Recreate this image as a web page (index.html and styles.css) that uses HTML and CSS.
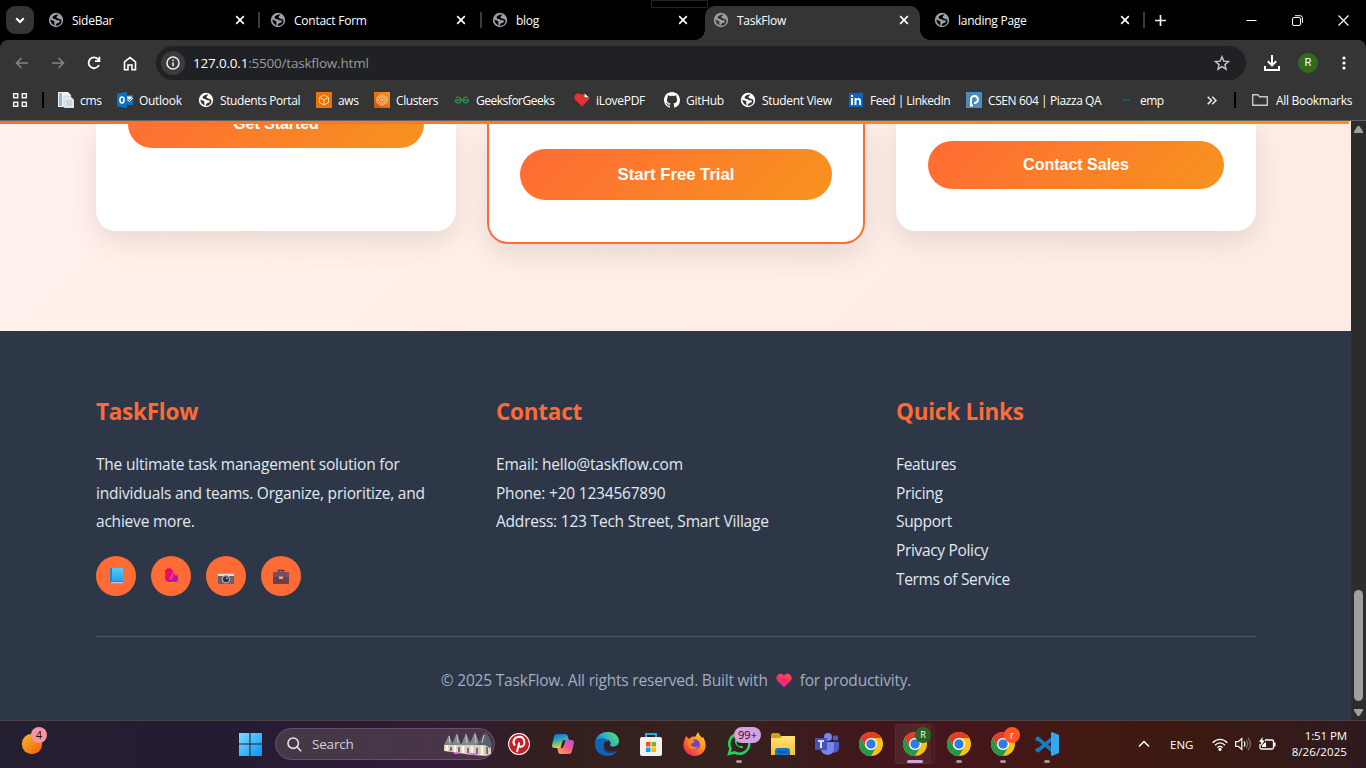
FILE: index.html
```html
<!DOCTYPE html>
<html lang="en">
<head>
<meta charset="utf-8">
<title>TaskFlow</title>
<link rel="stylesheet" href="styles.css">
</head>
<body>
<svg class="defs" width="0" height="0">
  <defs>
    <symbol id="globe" viewBox="0 0 16 16"><circle cx="8" cy="8" r="7.200" fill="currentColor"/><path d="M10.300 2.200C7.500 2.400 4.400 4 4.600 5.800c.2 1.200 1.900.9 2.900 1.500.8.6 1.700 1.200 3.200.9 1.400.1 1.500 1.200.8 2-.9.9-2.600.5-3.300 1.900l-.7 1.600c3.200.4 5.900-1.500 6.100-4.700-.3-1.300-1-2.200-2.700-2.300-1.500 0-2.500-.9-2.300-2.200.3-.8 1.300-.7 1.700-2.300z" fill="var(--cut)"/><path d="M2.300 7.600c.2 2.600 1.500 4.800 4.100 5.800.5-1.400-.5-1.900-.1-2.800C7.200 8.800 4.500 9 2.300 7.600z" fill="var(--cut)"/></symbol>
    <symbol id="close" viewBox="0 0 10 10"><path d="M1.200 1.200l7.600 7.600M8.800 1.200L1.200 8.800" stroke="currentColor" stroke-width="1.700"/></symbol>
    <symbol id="chrome" viewBox="0 0 24 24"><circle cx="12" cy="12" r="12" fill="#fbc116"/><path d="M1.600 6A12 12 0 0 1 22.400 6H12a6 6 0 0 0-5.200 9z" fill="#e33b2e"/><path d="M1.600 6A12 12 0 0 0 12 24l5.200-9A6 6 0 0 1 6.800 15z" fill="#229a48"/><circle cx="12" cy="12" r="6" fill="#fff"/><circle cx="12" cy="12" r="4.700" fill="#2b7de9"/></symbol>
    <linearGradient id="blue" x2="1" y2="1"><stop stop-color="#7ddcff"/><stop offset="1" stop-color="#0794f5"/></linearGradient>
    <linearGradient id="orange" x2="1" y2="1"><stop stop-color="#f4bc28"/><stop offset="1" stop-color="#f45b0b"/></linearGradient>
    <linearGradient id="book" x2="0" y2="1"><stop stop-color="#52ccf4"/><stop offset="1" stop-color="#2aa3ed"/></linearGradient>
    <linearGradient id="bird" x2=".6" y2="1"><stop stop-color="#f40c52"/><stop offset=".6" stop-color="#e60a78"/><stop offset="1" stop-color="#9b25b5"/></linearGradient>
    <linearGradient id="heart" x1=".7" x2=".4" y2="1"><stop stop-color="#fb5148"/><stop offset=".5" stop-color="#fa2b68"/><stop offset="1" stop-color="#e61dab"/></linearGradient>
    <linearGradient id="edge" x1="0" y1=".8" x2="1" y2=".1"><stop stop-color="#0c57b5"/><stop offset=".5" stop-color="#21a9df"/><stop offset="1" stop-color="#62df55"/></linearGradient>
    <linearGradient id="fox" x1="1" x2=".2" y2="1"><stop stop-color="#ffe23a"/><stop offset=".5" stop-color="#ff8a1f"/><stop offset="1" stop-color="#f2205c"/></linearGradient>
    <linearGradient id="cop1" x2=".3" y2="1"><stop stop-color="#1d60dd"/><stop offset=".5" stop-color="#25adb8"/><stop offset="1" stop-color="#eed034"/></linearGradient>
    <linearGradient id="cop2" x1="1" x2=".2" y2="1"><stop stop-color="#a657ee"/><stop offset=".5" stop-color="#ef5989"/><stop offset="1" stop-color="#ff9a54"/></linearGradient>
    <linearGradient id="folder" x2="0" y2="1"><stop stop-color="#ffe27a"/><stop offset="1" stop-color="#fbc02e"/></linearGradient>
    <linearGradient id="amber" x1="1" x2="0" y2="1"><stop stop-color="#f89a10"/><stop offset="1" stop-color="#cc4f18"/></linearGradient>
  </defs>
</svg>

<header class="browser">
  <div class="tabstrip">
    <span class="tab-search"><svg width="10" height="7" viewBox="0 0 10 7"><path d="M1.200 1.200L5 5l3.800-3.800" fill="none" stroke="#fff" stroke-width="2"/></svg></span>
    <div class="tab tab-first"><svg class="fav"><use href="#globe"/></svg><span>SideBar</span><svg class="x"><use href="#close"/></svg></div>
    <i class="tab-sep"></i>
    <div class="tab"><svg class="fav"><use href="#globe"/></svg><span>Contact Form</span><svg class="x"><use href="#close"/></svg></div>
    <i class="tab-sep"></i>
    <div class="tab"><svg class="fav"><use href="#globe"/></svg><span>blog</span><svg class="x"><use href="#close"/></svg></div>
    <div class="tab tab-active"><svg class="fav"><use href="#globe"/></svg><span>TaskFlow</span><svg class="x"><use href="#close"/></svg></div>
    <div class="tab tab-last"><svg class="fav"><use href="#globe"/></svg><span>landing Page</span><svg class="x"><use href="#close"/></svg></div>
    <i class="tab-sep"></i>
    <svg class="new-tab" width="11" height="11" viewBox="0 0 11 11"><path d="M5.500 0v11M0 5.500h11" stroke="#eee" stroke-width="1.700"/></svg>
    <div class="win">
      <svg width="11" height="11" viewBox="0 0 11 11"><path d="M.5 5.500h10" stroke="#fff"/></svg>
      <svg width="11" height="11" viewBox="0 0 11 11" fill="none" stroke="#fff"><rect x=".5" y="2.500" width="8" height="8" rx="1.500"/><path d="M3 .7h5.200q2.200 0 2.200 2.200v5"/></svg>
      <svg width="11" height="11" viewBox="0 0 11 11"><path d="M.5.5l10 10M10.500.5l-10 10" stroke="#fff" stroke-width="1.200"/></svg>
    </div>
    <i class="drag-mark"></i>
  </div>

  <div class="toolbar">
    <div class="nav">
      <svg width="14" height="12" viewBox="0 0 14 12" fill="none" stroke="#858585" stroke-width="1.600"><path d="M13 6H1.500M6.500 1l-5 5 5 5"/></svg>
      <svg width="14" height="12" viewBox="0 0 14 12" fill="none" stroke="#858585" stroke-width="1.600"><path d="M1 6h11.500M7.500 1l5 5-5 5"/></svg>
      <svg width="14" height="14" viewBox="0 0 14 14" fill="none" stroke="#fff" stroke-width="1.800"><path d="M12 9A5.400 5.400 0 1 1 11.300 3.500L12.500 5M12.400.8v4.400H8"/></svg>
      <svg width="14" height="15" viewBox="0 0 14 15" fill="none" stroke="#fff" stroke-width="1.600"><path d="M1.500 13.700V5.800L7 1.500l5.500 4.300v7.900H9V9H5v4.700z"/></svg>
    </div>
    <div class="omnibox">
      <span class="info"><svg width="14" height="14" viewBox="0 0 14 14"><circle cx="7" cy="7" r="6" fill="none" stroke="#eee" stroke-width="1.500"/><path d="M7 6.200v4M7 3.500v1.500" stroke="#eee" stroke-width="1.500"/></svg></span>
      <span class="url"><b>127.0.0.1</b>:5500/taskflow.html</span>
      <svg class="star" width="16" height="16" viewBox="0 0 16 16"><path d="M8 1.700l1.800 4.400 4.700.4-3.600 3.100 1.100 4.600L8 11.700l-4 2.500 1.100-4.600L1.500 6.500l4.700-.4z" fill="none" stroke="#c7c7c7" stroke-width="1.400"/></svg>
    </div>
    <svg class="download" width="16" height="16" viewBox="0 0 16 16" fill="none" stroke="#fff" stroke-width="2"><path d="M8 0v10M3.800 6.200L8 10.400l4.200-4.200M1 11v4h14v-4"/></svg>
    <span class="avatar">R</span>
    <svg class="dots" width="4" height="14" viewBox="0 0 4 14" fill="#fff"><circle cx="2" cy="2" r="1.600"/><circle cx="2" cy="7" r="1.600"/><circle cx="2" cy="12" r="1.600"/></svg>
  </div>

  <div class="bookmarks">
    <svg class="apps" width="16" height="16" viewBox="0 0 16 16" fill="none" stroke="#eee" stroke-width="1.500"><path d="M1.700 1.700h4v4h-4zM10.300 1.700h4v4h-4zM1.700 10.300h4v4h-4zM10.300 10.300h4v4h-4z"/></svg>
    <i class="bm-sep"></i>
    <span class="bm bm-cms"><svg viewBox="0 0 16 16"><path d="M0 0h10l3 3v12H0z" fill="#edf3f6"/><path d="M1 1h3v13H1z" fill="#92b9d4"/><path d="M6 4h6l4 4v8H6z" fill="#e4e9ec" stroke="#bbc5cc" stroke-width=".6"/><path d="M8 9h6M8 11h6M8 13h6" stroke="#aab6bd" stroke-width=".7"/></svg>cms</span>
    <span class="bm bm-outlook"><svg viewBox="0 0 16 16"><path d="M9 3h7v10H9z" fill="#0872c4"/><path d="M10 4.500h5v1L12.500 8 10 6z" fill="#fff"/><path d="M10 7.500l2.500 2L16 6" fill="none" stroke="#fff"/><path d="M0 1.500L10 0v16L0 14.500z" fill="#0872c4"/><ellipse cx="5" cy="8" rx="2.100" ry="2.900" fill="none" stroke="#fff" stroke-width="1.500"/></svg>Outlook</span>
    <span class="bm bm-portal"><svg class="white-globe"><use href="#globe"/></svg>Students Portal</span>
    <span class="bm bm-aws"><svg viewBox="0 0 16 16"><path d="M0 0h16v16H0z" fill="#ed7203"/><path d="M8 3l4.500 2.400v5.200L8 13l-4.500-2.400V5.400zM3.500 5.400L8 8l4.500-2.600M8 8v5" fill="none" stroke="#ffe1bc" stroke-width=".9"/></svg>aws</span>
    <span class="bm bm-clusters"><svg viewBox="0 0 16 16"><path d="M0 0h16v16H0z" fill="url(#amber)"/><g fill="none" stroke="#ffd5aa" stroke-width=".9"><path d="M8 2.500l5 3v5l-5 3-5-3v-5z"/><circle cx="8" cy="8" r="3.300"/><circle cx="8" cy="8" r="1.200"/></g></svg>Clusters</span>
    <span class="bm bm-gfg"><svg viewBox="0 0 16 16" fill="none" stroke="#2f8d46" stroke-width="1.300"><path d="M1 8h14M2 5.700c2-1.200 4.900-.3 4.900 2.300 0 4-5.200 3.800-5.700 0M14 5.700c-2-1.200-4.900-.3-4.900 2.300 0 4 5.200 3.800 5.700 0"/></svg>GeeksforGeeks</span>
    <span class="bm bm-pdf"><svg viewBox="0 0 16 16"><path d="M8 14.500L1.500 8C-2 4 3-.5 7.500 2.500L10 2v4h5.500c-.3 1-1 2-1.500 2.500z" fill="#e5322d"/><path d="M10.500 1.500l4.500 4h-4.500z" fill="#fff"/></svg>iLovePDF</span>
    <span class="bm bm-github"><svg viewBox="0 0 16 16"><path fill="#fff" d="M8 0C3.580 0 0 3.580 0 8c0 3.540 2.290 6.530 5.470 7.590.4.070.55-.17.55-.38 0-.19-.01-.82-.01-1.490-2.010.37-2.530-.49-2.690-.94-.09-.23-.48-.94-.82-1.130-.28-.15-.68-.52-.01-.53.63-.01 1.080.58 1.230.82.72 1.210 1.870.87 2.330.66.070-.52.28-.87.51-1.070-1.780-.2-3.640-.89-3.640-3.950 0-.87.31-1.590.82-2.150-.08-.2-.36-1.020.08-2.120 0 0 .67-.21 2.200.82.64-.18 1.320-.27 2-.27s1.360.09 2 .27c1.530-1.040 2.200-.82 2.200-.82.44 1.100.16 1.920.08 2.120.51.56.82 1.270.82 2.150 0 3.070-1.870 3.750-3.650 3.950.29.25.54.73.54 1.480 0 1.070-.01 1.930-.01 2.200 0 .21.15.46.55.38A8 8 0 0 0 16 8c0-4.420-3.580-8-8-8z"/></svg>GitHub</span>
    <span class="bm bm-student"><svg class="white-globe"><use href="#globe"/></svg>Student View</span>
    <span class="bm bm-linkedin"><svg viewBox="0 0 16 16"><path d="M1 1h14v14H1z" fill="#0a66c2"/><path d="M3 6h2v7H3zM3 3h2v2H3zM6.500 6h2v1c1.100-1.800 4.500-1.500 4.500 1.600V13h-2V9c0-1.800-2.500-1.800-2.500 0v4h-2z" fill="#fff"/></svg>Feed | LinkedIn</span>
    <span class="bm bm-piazza"><svg viewBox="0 0 16 16"><path d="M0 0h16v16H0z" fill="#4b8bbd"/><path d="M5 14V6.800a3.500 3.500 0 1 1 3 4.200M4 13.500h3" fill="none" stroke="#fff" stroke-width="2"/></svg>CSEN 604 | Piazza QA</span>
    <span class="bm bm-emp"><svg viewBox="0 0 16 16"><path d="M5 8h7" stroke="#126094" stroke-width="1.600"/></svg>emp</span>
    <svg class="more" width="10" height="9" viewBox="0 0 10 9" fill="none" stroke="#eee" stroke-width="1.500"><path d="M.7.7l3.800 3.800L.7 8.300M5.200.7L9 4.500 5.200 8.300"/></svg>
    <i class="bm-sep"></i>
    <span class="bm bm-all"><svg viewBox="0 0 16 16"><path d="M.7 13.300V2.700h5l2 2h7.600v8.600z" fill="none" stroke="#c8c8c8" stroke-width="1.400"/></svg>All Bookmarks</span>
  </div>
</header>

<div class="viewport">
  <div class="page">
    <div class="progress"></div>
    <section class="pricing">
      <div class="card card-basic"><button class="btn">Get Started</button></div>
      <div class="card card-pro"><button class="btn">Start Free Trial</button></div>
      <div class="card card-team"><button class="btn">Contact Sales</button></div>
    </section>
    <footer class="footer">
      <div class="cols">
        <div class="col">
          <h3>TaskFlow</h3>
          <p>The ultimate task management solution for<br>individuals and teams. Organize, prioritize, and<br>achieve more.</p>
          <div class="social">
            <a><svg viewBox="0 0 16 16"><path d="M2 0h13v16H4q-2 0-2-2z" fill="#3280c4"/><path d="M4 0h11v13H4z" fill="url(#book)"/><path d="M3 14h12v1.500H3z" fill="#c9c5e8"/></svg></a>
            <a><svg viewBox="0 0 16 16"><path d="M1 4.500L2.500 2C4-.3 8-.2 9.500 2l1.500 3.500L13 8l2-1.500V13q-1 1-4 1H5C1.500 13 2 9 2.500 5.500z" fill="url(#bird)"/><path d="M6 10c2.500-1 2.500-4.500 3.500-7 2 4 1 7.500-2 9z" fill="#fb3b80"/><path d="M0 4.500l2-1v2zM3.500 14.300h2.500v1.200H3.500zM8 14.300h2.500v1.200H8z" fill="#f5a000"/></svg></a>
            <a><svg viewBox="0 0 16 16"><path d="M0 5h16v11H0z" fill="#655f6e"/><path d="M0 5.500h16V8H0z" fill="#dedce4"/><circle cx="8" cy="11.300" r="4.300" fill="#aaa5b0"/><circle cx="8" cy="11.300" r="3" fill="#342e43"/><circle cx="9" cy="10.300" r="1" fill="#aba6dc"/></svg></a>
            <a><svg viewBox="0 0 16 16"><path d="M5.500 4V2.500h5V4" fill="none" stroke="#543544" stroke-width="1.500"/><rect y="4" width="16" height="12" rx="1" fill="#674052"/><path d="M0 4h16v5H0z" fill="#7d4d5c"/><path d="M6 8.500h4v2.500H6z" fill="#eba37e"/></svg></a>
          </div>
        </div>
        <div class="col">
          <h3>Contact</h3>
          <p>Email: hello@taskflow.com<br>Phone: +20 1234567890<br>Address: 123 Tech Street, Smart Village</p>
        </div>
        <div class="col col-links">
          <h3>Quick Links</h3>
          <p>Features<br>Pricing<br>Support<br>Privacy Policy<br>Terms of Service</p>
        </div>
      </div>
      <div class="legal"><span>© 2025 TaskFlow. All rights reserved. Built with</span><svg width="16" height="15" viewBox="0 0 16 15"><path d="M8 14.500L1.300 7.800C-2 3.500 4-2 8 2.500c4-4.500 10 1 6.700 5.300z" fill="url(#heart)"/></svg><span>for productivity.</span></div>
    </footer>
  </div>
  <div class="scrollbar"><i class="up"></i><i class="thumb"></i><i class="down"></i></div>
</div>

<div class="taskbar">
  <div class="widget"><svg width="22" height="22" viewBox="0 0 22 22"><circle cx="11" cy="11" r="10.200" fill="url(#orange)"/></svg><b class="badge badge-four">4</b></div>
  <svg class="start" width="24" height="24" viewBox="0 0 24 24"><path d="M1 1h10.500v10.500H1zM12.500 1H24v10.500H12.500zM1 12.500h10.500V24H1zM12.500 12.500H24V24H12.500z" fill="url(#blue)"/></svg>
  <div class="search">
    <svg width="15" height="15" viewBox="0 0 15 15" fill="none" stroke="#e7e2e9" stroke-width="1.600"><circle cx="6.200" cy="6.200" r="5.200"/><path d="M10 10l4.200 4.200"/></svg>
    <span>Search</span>
    <svg class="castle" width="48" height="26" viewBox="0 0 48 26"><path d="M0 14l47-2v11l-5 2-14-1-14-2-14-2z" fill="#d8cbc2"/><path d="M0 14L5 4l4 10zM8 13l5-11 4 12zM17 14l5-12 5 12zM25 14L31 1l5 13z" fill="#7c888c"/><path d="M33 14L41 1q5 4 7 13l-2 3-5-3z" fill="#566268"/><path d="M5 5l1 7M13 4l1 8M22 4l1 8M31 3l1 9M40 4l-2 8" stroke="#c6cecb"/><path d="M3 14v6M11 14v7M19 15v7M28 15v8M38 15v9" stroke="#fff3df" stroke-width="2.500"/><path d="M7 16v4M15 16v5M24 17v5M33 17v6M43 16v7" stroke="#4a4652" stroke-width="1.400"/><path d="M10 22h5M25 23h8" stroke="#de70e8" stroke-width="2"/></svg>
  </div>
  <div class="dock">
    <span><svg viewBox="0 0 24 24"><circle cx="12" cy="12" r="11" fill="#fff"/><circle cx="12" cy="12" r="10" fill="#c61f26"/><path d="M10 20l2.200-9.500M7.800 13.500C4.500 9 8 4.800 12.400 4.800c6 0 6.600 10 1.400 10-1.300 0-2-.6-2.500-1.500" fill="none" stroke="#fff" stroke-width="2"/></svg></span>
    <span><svg viewBox="0 0 24 24"><path d="M6 2h8c2 0 2.500 1 3 3l1 3h-4c-2 0-2.500 1-3 3l-1.500 5H4c-4 0-3-3-2.500-5L3 5c.5-2 1-3 3-3z" fill="url(#cop1)"/><path d="M18 22h-8c-2 0-3-1-3-3l-1-3h4c2 0 2.500-1 3-3l1.500-5H20c4 0 3 3 2.500 5L21 19c-.5 2-1 3-3 3z" fill="url(#cop2)"/></svg></span>
    <span><svg viewBox="0 0 24 24"><path d="M0 12C0-3 23-4 24 9c0 6-8 7-9 4 2-3-1-6-5-5-5 2-4 13 3 16C5 24 0 19 0 12z" fill="url(#edge)"/><path d="M0 11c2-6 11-6 14-1-3-2-6 1-5 5 1 5 6 7 13 4-4 6-12 6-17 2-4-3-5-7-5-10z" fill="#1263b8"/><path d="M9 14c1 5 6 7 13 4-3 4-8 4-11 2-2-1-3-4-2-6z" fill="#1a3e79"/></svg></span>
    <span><svg viewBox="0 0 24 24"><path d="M7 6V2h10v4" fill="none" stroke="#28a8ea" stroke-width="2"/><rect x="1" y="5" width="22" height="19" rx="2" fill="#f1f1f2"/><path d="M7 10h4.500v4.500H7z" fill="#f25022"/><path d="M12.500 10H17v4.500h-4.500z" fill="#7fba00"/><path d="M7 15.500h4.500V20H7z" fill="#00a4ef"/><path d="M12.500 15.500H17V20h-4.500z" fill="#ffb900"/></svg></span>
    <span><svg viewBox="0 0 24 24"><path d="M2 7l1-3 3 3c2-2 4-3 6-2l3-5c1 3 3 4 4 6l1-1c5 8 3 18-8 19C2 24-2 14 2 7z" fill="url(#fox)"/><circle cx="12" cy="12.500" r="5" fill="#7240c8"/><path d="M5 8c3-1 5 0 7 2-1 1-3 1-4 2 0 3 4 4 7 2-2 5-9 4-10-1z" fill="#ff8228"/></svg></span>
    <span><svg viewBox="0 0 24 24" fill="none" stroke="#22d062" stroke-width="2.600"><path d="M2 22l1.500-5.500a10 10 0 1 1 4 4z"/><path d="M8.500 7c-3 4 4 11 8 8.500l-2.500-2-1.500 1-3-3 1-1.500z" fill="#22d062" stroke="none"/></svg><b class="badge badge-many">99+</b><i class="mark"></i></span>
    <span><svg viewBox="0 0 24 24"><path d="M0 3q0-2 2-2h6l2 3h12v6H0z" fill="#dd9b0b"/><path d="M0 6h9l2-2h13v19H0z" fill="url(#folder)"/><path d="M4 23v-4q0-3 3-3h9q3 0 3 3v4z" fill="#0f75ca"/><path d="M7 20h9" stroke="#0a4d94" stroke-width="1.500"/></svg></span>
    <span><svg viewBox="0 0 24 24"><circle cx="13" cy="5" r="4" fill="#7b83eb"/><circle cx="20.500" cy="6" r="2.800" fill="#5059c9"/><path d="M16 10h8v6q-1 6-8 4z" fill="#5059c9"/><path d="M7 10h12v8c-1 6-11 7-13 0z" fill="#7b83eb"/><path d="M0 6h12v12H0z" fill="#4650b9"/><path d="M3 9h6M6 9v7" stroke="#fff" stroke-width="1.700"/></svg></span>
    <span><svg><use href="#chrome"/></svg></span>
    <span class="focused"><svg><use href="#chrome"/></svg><b class="badge badge-r">R</b><i class="mark mark-wide"></i></span>
    <span><svg><use href="#chrome"/></svg><i class="mark"></i></span>
    <span><svg><use href="#chrome"/></svg><b class="badge badge-o">r</b><i class="mark"></i></span>
    <span><svg viewBox="0 0 24 24"><path d="M18 6L3 18.500 1 17M1 8l2-1.500L18 19" fill="none" stroke="#147bc1" stroke-width="3.600"/><path d="M17 0l7 3v18l-7 3-1-1V1z" fill="#32a8ef"/></svg><i class="mark"></i></span>
  </div>
  <div class="tray">
    <svg class="chev" width="12" height="8" viewBox="0 0 12 8"><path d="M1 6.500l5-5 5 5" fill="none" stroke="#fff" stroke-width="1.500"/></svg>
    <span class="lang">ENG</span>
    <svg class="wifi" width="16" height="13" viewBox="0 0 16 13" fill="none" stroke="#fff" stroke-width="1.300"><path d="M.7 4.800C5 .2 11 .2 15.300 4.800M3 7.300c3-3.200 7-3.200 10 0M5.300 9.600c1.600-1.600 3.800-1.600 5.400 0"/><circle cx="8" cy="11.300" r="1" fill="#fff"/></svg>
    <svg class="sound" width="16" height="14" viewBox="0 0 16 14" fill="none" stroke="#fff" stroke-width="1.200"><path d="M.7 4.700h2.600L6.800 1.500v11L3.300 9.300H.7zM9 4.500q2 2.500 0 5"/><path d="M11 3q3.500 4 0 8M13 1q5 6 0 12" stroke="#806866"/></svg>
    <svg class="batt" width="17" height="14" viewBox="0 0 17 14"><path d="M6 3h7q1.500 0 1.500 1.500v6q0 1.500-1.500 1.500H2.500Q1 12 1 10.500V7" fill="none" stroke="#fff" stroke-width="1.300"/><path d="M15 5.500h1.500v4H15zM3 10V8l4-3v5zM3.500 0L0 5h2.300L1.500 9 6 3.500H3.500z" fill="#fff"/></svg>
    <div class="clock"><span>1:51 PM</span><span class="date">8/26/2025</span></div>
  </div>
</div>
</body>
</html>
```
FILE: styles.css
```css
* { box-sizing: border-box; }
body { margin: 0; width: 1366px; height: 768px; overflow: hidden; display: flex; flex-direction: column; background: #000; font-family: "Open Sans", "Noto Sans", sans-serif; color: #fff; }
.defs { position: absolute; }
svg { flex: none; display: block; }

.browser { height: 121px; flex: none; border-bottom: 1px solid #66625f; background: #353535; font-size: 12px; }
.tabstrip { height: 40px; display: flex; align-items: center; background: #000; position: relative; }
.tab-search { width: 28px; height: 28px; margin-left: 6px; border-radius: 9px; background: #353535; display: grid; place-items: center; }
.tab { --cut: #000; width: 220px; height: 34px; margin-top: 6px; padding: 0 14px 6px 10px; display: flex; align-items: center; letter-spacing: -.25px; white-space: nowrap; }
.tab-first { width: 224px; padding: 0 13px 6px 14px; }
.fav { width: 16px; height: 16px; margin-right: 8px; color: #9aa0a8; }
.x { width: 10px; height: 10px; margin-left: auto; }
.tab-sep { width: 2px; height: 16px; background: #3b3b3b; }
.tab-active { --cut: #353535; width: 215px; margin-left: 3px; padding: 0 11px 6px 8px; background: #353535; border-radius: 10px 10px 0 0; position: relative; }
.tab-active::before, .tab-active::after { content: ""; position: absolute; bottom: 0; width: 10px; height: 10px; }
.tab-active::before { left: -10px; background: radial-gradient(circle at 0 0, transparent 9.5px, #353535 10px); }
.tab-active::after { right: -10px; background: radial-gradient(circle at 100% 0, transparent 9.5px, #353535 10px); }
.tab-last { width: 223px; padding: 0 13px 6px 14px; }
.new-tab { margin-left: 10px; }
.win { margin-left: auto; padding-right: 17px; display: flex; gap: 35px; }
.drag-mark { position: absolute; left: 651px; top: 0; width: 57px; height: 8px; border: 1px solid #242424; }

.toolbar { height: 46px; display: flex; align-items: center; background: #353535; border-radius: 8px 8px 0 0; box-shadow: 0 -8px #000; clip-path: inset(0 0 0 0); }
.browser { background: linear-gradient(#000 0 52px, #353535 52px); }
.nav { width: 156px; padding-left: 15px; display: flex; align-items: center; gap: 22px; }
.omnibox { width: 1090px; height: 34px; border-radius: 17px; background: #202124; display: flex; align-items: center; padding: 0 16px 0 5px; }
.info { width: 24px; height: 24px; border-radius: 50%; background: #3b3b3c; display: grid; place-items: center; }
.url { margin-left: 8px; font-size: 13.500px; letter-spacing: -.2px; color: #9a9a9c; }
.url b { font-weight: 400; color: #fff; }
.star { margin-left: auto; }
.download { margin-left: 18px; }
.avatar { width: 20px; height: 20px; margin-left: 18px; border-radius: 50%; background: #306c1c; font: 11px/20px Roboto, sans-serif; text-align: center; }
.dots { margin-left: 24px; }

.bookmarks { height: 34px; display: flex; align-items: flex-start; padding-top: 6px; background: #353535; }
.apps { margin: 0 14px 0 12px; }
.bm-sep { width: 2px; height: 16px; margin-right: 14px; background: #000; }
.bm { height: 16px; display: flex; align-items: center; white-space: nowrap; flex: none; letter-spacing: -.3px; }
.bm svg { --cut: #353535; width: 16px; height: 16px; margin-right: 6px; }
.bm-cms { width: 59px; }
.bm-outlook { width: 81px; }
.bm-portal { width: 118px; letter-spacing: -.4px; }
.bm-aws { width: 58px; }
.bm-clusters { width: 80px; letter-spacing: -.4px; }
.bm-gfg { width: 120px; letter-spacing: -.48px; }
.bm-pdf { width: 90px; }
.bm-github { width: 76px; }
.bm-student { width: 108px; }
.bm-linkedin { width: 118px; letter-spacing: -.5px; }
.bm-piazza { width: 152px; letter-spacing: -.4px; }
.bm-emp { width: 89px; letter-spacing: -.5px; }
.more { margin: 4px 17px 0 0; }
.bm-all { margin-left: 2px; }
.bm-all svg { margin-right: 8px; }

.viewport { height: 599px; flex: none; display: flex; }
.page { width: 1351px; position: relative; overflow: hidden; }
.progress { position: absolute; z-index: 2; top: 0; left: 0; width: 1349px; height: 3px; background: linear-gradient(90deg, #ff6b35, #f7931e); }
.pricing { height: 210px; padding: 0 95px 0 96px; display: flex; justify-content: space-between; align-items: flex-start; background: linear-gradient(135deg, #fff1ed, #fff0e9 25%, #feebe4); }
.card { width: 360px; height: 110px; padding: 0 32px; background: #fff; border-radius: 0 0 20px 20px; box-shadow: 0 10px 30px rgba(0,0,0,.1); }
.card-pro { width: 378px; height: 123px; margin: 0 -9px; padding: 28px 31px 0; border: 2px solid #ff6b35; border-top: 0; border-radius: 0 0 21px 21px; }
.card-team { padding-top: 20px; }
.btn { display: block; width: 100%; height: 48px; padding: 0; border: 0; border-radius: 25px; background: linear-gradient(135deg, #ff6b35, #f7931e); color: #fff; font: bold 16px "Liberation Sans", Arial, sans-serif; }
.card-basic .btn { margin-top: -21px; letter-spacing: -.05px; }
.card-pro .btn { height: 51px; font-size: 16.700px; border-radius: 26px; }

.footer { height: 389px; padding: 64px 95px 0 96px; background: #2d3748; }
.cols { display: grid; grid-template-columns: repeat(3, 360px); gap: 40px; height: 241px; }
.col h3 { margin: 0 0 21px; font-size: 22.500px; line-height: 34px; font-weight: 700; letter-spacing: -.25px; color: #ff6b35; }
.col p { margin: 0; font-size: 15.500px; line-height: 28.700px; letter-spacing: -.21px; color: #e2e8f0; white-space: nowrap; }
.col-links p { letter-spacing: -.33px; }
.social { display: flex; gap: 15px; margin-top: 20px; }
.social a { width: 40px; height: 40px; border-radius: 50%; background: #ff6b35; display: grid; place-items: center; }
.social svg { width: 16px; height: 16px; }
.legal { height: 87px; border-top: 1px solid #4a5568; display: flex; justify-content: center; align-items: center; gap: 8px; color: #a0aec0; font-size: 15.500px; letter-spacing: -.2px; white-space: nowrap; }

.scrollbar { width: 15px; background: #2c2c2c; display: flex; flex-direction: column; align-items: center; }
.up, .down { width: 9px; height: 7px; background: #9f9f9f; }
.up { margin-top: 5px; clip-path: polygon(40% 0, 60% 0, 100% 80%, 100% 100%, 0 100%, 0 80%); }
.thumb { width: 9px; height: 111px; margin-top: 457px; border-radius: 5px; background: #9f9f9f; }
.down { margin-top: 8px; clip-path: polygon(0 0, 100% 0, 100% 20%, 60% 100%, 40% 100%, 0 20%); }

.taskbar { height: 48px; flex: none; border-top: 1px solid #4d3f43; padding-bottom: 1px; display: flex; align-items: center; background: linear-gradient(90deg, #241f30 0, #241c32 17%, #321a38 32%, #33201e 40%, #35221f 53%, #43151a 65%, #45161a 72%, #421911 79%, #3b1912 88%, #2e1b20 100%); }
.widget { width: 217px; padding-left: 21px; position: relative; }
.badge { position: absolute; height: 16px; border-radius: 8px; font-weight: 400; font-size: 11px; line-height: 16px; text-align: center; }
.badge-four { left: 31px; top: -6px; width: 16px; background: #ff929e; color: #111; }
.start { margin-left: 21px; }
.search { width: 220px; height: 32px; margin-left: 13px; border: 1px solid #665466; border-radius: 16px; background: linear-gradient(90deg, #433947, #4b3449); display: flex; align-items: center; padding: 0 2px 0 11px; font-size: 13.500px; color: #d7ced9; }
.search span { margin-left: 10px; letter-spacing: -.2px; }
.castle { margin-left: auto; }
.dock { margin-left: 4px; display: flex; gap: 4px; }
.dock > span { width: 40px; height: 40px; display: grid; place-items: center; position: relative; }
.dock svg { width: 24px; height: 24px; }
.dock .focused { background: rgba(255,255,255,.07); border-radius: 4px; box-shadow: inset 0 0 0 1px rgba(255,255,255,.05), inset -5px 0 0 -1px rgba(60,10,15,.35); }
.mark { position: absolute; bottom: 1px; left: 17px; width: 6px; height: 3px; border-radius: 2px; background: #a39295; }
.mark-wide { left: 12px; width: 16px; background: #d4a0df; }
.badge-many { left: 15px; top: 3px; width: 27px; background: #d9a0e2; color: #111; }
.badge-r { left: 20px; top: 3px; width: 16px; background: #286720; font-size: 9px; }
.badge-o { left: 21px; top: 3px; width: 16px; background: #ff5622; font-size: 10px; }
.tray { margin-left: auto; display: flex; align-items: center; font-size: 11.500px; }
.lang { margin-left: 20px; width: 42px; }
.sound { margin-left: 7px; }
.batt { margin-left: 8px; }
.clock { width: 71px; margin-right: 19px; display: flex; flex-direction: column; text-align: right; line-height: 16px; letter-spacing: -.1px; }
.date { letter-spacing: .1px; }
```
